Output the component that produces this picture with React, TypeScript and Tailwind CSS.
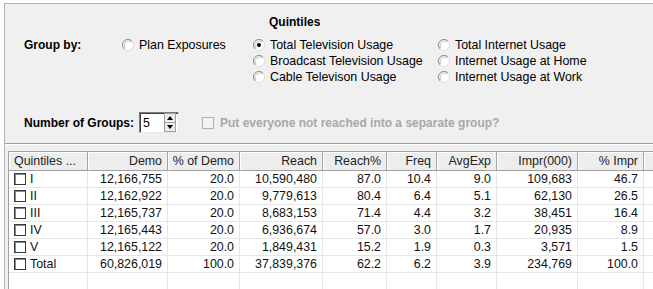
import React from 'react';

const cols = [79, 80, 72, 83, 64, 50, 60, 81, 66];
const headers = ['Quintiles ...', 'Demo', '% of Demo', 'Reach', 'Reach%', 'Freq', 'AvgExp', 'Impr(000)', '% Impr'];

const rows = [
  ['I', '12,166,755', '20.0', '10,590,480', '87.0', '10.4', '9.0', '109,683', '46.7'],
  ['II', '12,162,922', '20.0', '9,779,613', '80.4', '6.4', '5.1', '62,130', '26.5'],
  ['III', '12,165,737', '20.0', '8,683,153', '71.4', '4.4', '3.2', '38,451', '16.4'],
  ['IV', '12,165,443', '20.0', '6,936,674', '57.0', '3.0', '1.7', '20,935', '8.9'],
  ['V', '12,165,122', '20.0', '1,849,431', '15.2', '1.9', '0.3', '3,571', '1.5'],
  ['Total', '60,826,019', '100.0', '37,839,376', '62.2', '6.2', '3.9', '234,769', '100.0'],
];

function Radio({ checked }: { checked?: boolean }) {
  return (
    <svg width="12" height="12" viewBox="0 0 12 12" className="shrink-0">
      <circle cx="6" cy="6" r="5.5" fill="#fff" stroke="#dcdcdc" />
      <path d="M2.1 9.9 A5.5 5.5 0 0 1 9.9 2.1" fill="none" stroke="#8a8a8a" />
      <path d="M3 9 A4.3 4.3 0 0 1 9 3" fill="none" stroke="#c8c8c8" />
      {checked && <circle cx="6" cy="6" r="2" fill="#000" />}
    </svg>
  );
}

function RadioItem({ label, checked }: { label: string; checked?: boolean }) {
  return (
    <div className="flex items-center h-[16px] gap-[5px]">
      <Radio checked={checked} />
      <span className="leading-[16px] text-[12.4px]">{label}</span>
    </div>
  );
}

function Spinner() {
  return (
    <div className="w-[40px] h-[21px] flex items-center bg-white border border-t-[#7a7a7a] border-l-[#7a7a7a] border-b-[#e8e8e8] border-r-[#e8e8e8] shadow-[inset_1px_1px_0_#404040]">
      <span className="pl-[3px] flex-1 leading-[16px] text-[12.4px]">5</span>
      <div className="flex flex-col w-[12px] h-[19px] mr-[2px] border border-[#a0a0a0] bg-[#ececec]">
        <div className="flex-1 flex items-center justify-center border-b border-[#a0a0a0]">
          <div className="w-0 h-0 border-l-[3px] border-r-[3px] border-b-[4px] border-l-transparent border-r-transparent border-b-black" />
        </div>
        <div className="flex-1 flex items-center justify-center">
          <div className="w-0 h-0 border-l-[3px] border-r-[3px] border-t-[4px] border-l-transparent border-r-transparent border-t-black" />
        </div>
      </div>
    </div>
  );
}

function CellBox() {
  return <div className="w-[12px] h-[12px] shrink-0 border border-[#3a3a3a] bg-white shadow-[inset_1px_1px_0_#8a8a8a]" />;
}

export default function App() {
  return (
    <div className="w-[653px] h-[289px] overflow-hidden bg-white pt-[3px] pl-[4px] font-['Liberation_Sans',Arial,sans-serif] text-[12px] text-black">
      <div className="h-[286px] border-l border-t border-[#b4b4b4] bg-[#f0f0f0] flex flex-col">
        <div className="pt-[10px] pl-[264px] font-bold leading-[16px]">Quintiles</div>

        <div className="mt-[7px] pl-[19px] flex">
          <div className="w-[98px] font-bold leading-[16px]">Group by:</div>
          <div className="w-[131px]">
            <RadioItem label="Plan Exposures" />
          </div>
          <div className="w-[185px] flex flex-col">
            <RadioItem label="Total Television Usage" checked />
            <RadioItem label="Broadcast Television Usage" />
            <RadioItem label="Cable Televison Usage" />
          </div>
          <div className="flex flex-col">
            <RadioItem label="Total Internet Usage" />
            <RadioItem label="Internet Usage at Home" />
            <RadioItem label="Internet Usage at Work" />
          </div>
        </div>

        <div className="mt-[27px] pl-[19px] flex items-center h-[21px]">
          <div className="w-[115px] font-bold">Number of Groups:</div>
          <Spinner />
          <div className="ml-[23px] w-[12px] h-[12px] border border-[#b0b0b0] bg-[#f4f4f4]" />
          <span className="ml-[6px] font-bold text-[#a8a8a8]">Put everyone not reached into a separate group?</span>
        </div>

        <div className="mt-[10px] h-px bg-[#a0a0a0]" />
        <div className="h-px bg-white" />

        <div className="mt-[6px] ml-[3px] flex-1 border-l border-t border-[#a0a0a0] bg-white flex flex-col text-[12.4px]">
          <div className="flex h-[19px] border-b border-[#a0a0a0] bg-[#ededed] text-[#222]">
            {headers.map((h, i) => (
              <div
                key={h}
                style={{ width: cols[i] }}
                className={
                  'shrink-0 h-full flex items-center border-r border-[#a5a5a5] shadow-[inset_1px_1px_0_#fff] ' +
                  (i === 0 ? 'pl-[5px] justify-start' : 'pr-[5px] justify-end')
                }
              >
                {h}
              </div>
            ))}
            <div className="flex-1 shadow-[inset_1px_1px_0_#fff]" />
          </div>

          {rows.map((r) => (
            <div key={r[0]} className="flex h-[17px] border-b border-[#e6e6e6] text-[#111]">
              {r.map((c, i) => (
                <div
                  key={i}
                  style={{ width: cols[i] }}
                  className={
                    'shrink-0 h-full flex items-center border-r border-[#e6e6e6] ' +
                    (i === 0 ? 'pl-[5px] gap-[4px]' : 'pr-[5px] justify-end')
                  }
                >
                  {i === 0 && <CellBox />}
                  {c}
                </div>
              ))}
              <div className="flex-1" />
            </div>
          ))}

          <div className="flex flex-1">
            {cols.map((w, i) => (
              <div key={i} style={{ width: w }} className="shrink-0 border-r border-[#e6e6e6]" />
            ))}
          </div>
        </div>
      </div>
    </div>
  );
}
